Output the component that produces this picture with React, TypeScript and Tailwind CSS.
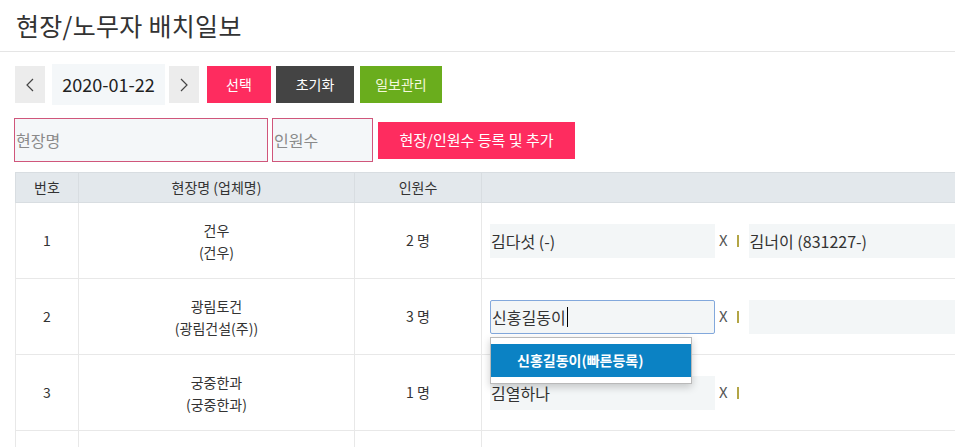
import React from "react";

const rows = [
  { no: 1, site: "건우", company: "(건우)", count: "2 명" },
  { no: 2, site: "광림토건", company: "(광림건설(주))", count: "3 명" },
  { no: 3, site: "궁중한과", company: "(궁중한과)", count: "1 명" },
];

function NameBox({ text, focused, caret }: { text?: string; focused?: boolean; caret?: boolean }) {
  return (
    <div
      className={
        "flex h-[34px] w-[225px] shrink-0 items-center bg-[#f3f6f7] pl-px text-[16px] text-[#333] " +
        (focused ? "rounded-[2px] border border-[#82a8dc] pl-0" : "")
      }
    >
      {text}
      {caret && <span className="ml-px h-[20px] w-px bg-black" />}
    </div>
  );
}

function Sep() {
  return (
    <div className="flex shrink-0 items-center gap-[9px] pl-[4px] pr-[10px] text-[15px] text-[#555]">
      <span>X</span>
      <span className="h-[12px] w-[2px] bg-[#b3a545]" />
    </div>
  );
}

export default function App() {
  return (
    <div className="h-[447px] w-[955px] overflow-hidden bg-white font-['Noto_Sans_CJK_KR','Noto_Sans',sans-serif] text-[#333]">
      <div className="flex h-[52px] items-center border-b border-[#e5e5e5] pl-[16px]">
        <h1 className="text-[25px] font-normal tracking-[0.3px] text-[#333]">현장/노무자 배치일보</h1>
      </div>

      <div className="mt-[12px] flex items-center pl-[15px]">
        <button className="flex h-[37px] w-[30px] items-center justify-center bg-[#ececec] text-[#444]">
          <svg width="8" height="14" viewBox="0 0 8 14" fill="none" stroke="#444" strokeWidth="1.2">
            <path d="M7 1 1 7l6 6" />
          </svg>
        </button>
        <div className="ml-[7px] flex h-[41px] w-[113px] items-center justify-center bg-[#f4f7f9] text-[18px] text-[#222]">
          2020-01-22
        </div>
        <button className="ml-[4px] flex h-[37px] w-[30px] items-center justify-center bg-[#ececec]">
          <svg width="8" height="14" viewBox="0 0 8 14" fill="none" stroke="#444" strokeWidth="1.2">
            <path d="M1 1l6 6-6 6" />
          </svg>
        </button>
        <button className="ml-[8px] h-[37px] w-[64px] bg-[#fe2c5f] text-[14px] text-white">선택</button>
        <button className="ml-[5px] h-[37px] w-[78px] bg-[#444444] text-[14px] text-white">초기화</button>
        <button className="ml-[6px] h-[37px] w-[82px] bg-[#6aad1d] text-[14px] text-[#f4f8dc]">일보관리</button>
      </div>

      <div className="mt-[13px] flex items-center pl-[14px]">
        <div className="flex h-[44px] w-[254px] items-center border border-[#d0567b] bg-[#f4f7f9] pl-[1px] text-[16px] text-[#8a8a8a]">
          현장명
        </div>
        <div className="ml-[4px] flex h-[44px] w-[101px] items-center border border-[#d0567b] bg-[#f4f7f9] pl-[1px] text-[16px] text-[#8a8a8a]">
          인원수
        </div>
        <button className="ml-[5px] h-[37px] w-[197px] bg-[#fe2c5f] text-[15px] text-white">현장/인원수 등록 및 추가</button>
      </div>

      <div className="mt-[10px] pl-[15px]">
        <table className="w-[1100px] table-fixed border-collapse text-[14px] text-[#333]">
          <colgroup>
            <col className="w-[63px]" />
            <col className="w-[276px]" />
            <col className="w-[127px]" />
            <col />
          </colgroup>
          <thead>
            <tr className="h-[30px] bg-[#e3e8ec]">
              <th className="border border-[#d8dde1] font-normal">번호</th>
              <th className="border border-[#d8dde1] font-normal">현장명 (업체명)</th>
              <th className="border border-[#d8dde1] font-normal">인원수</th>
              <th className="border border-[#d8dde1] font-normal"></th>
            </tr>
          </thead>
          <tbody>
            {rows.map((r) => (
              <tr key={r.no} className="h-[76px]">
                <td className="border border-[#e8e8e8] text-center">{r.no}</td>
                <td className="border border-[#e8e8e8] text-center leading-[22px]">
                  <div>{r.site}</div>
                  <div>{r.company}</div>
                </td>
                <td className="border border-[#e8e8e8] text-center">{r.count}</td>
                <td className="border border-[#e8e8e8] pl-[8px]">
                  {r.no === 1 && (
                    <div className="flex items-center">
                      <NameBox text="김다섯 (-)" />
                      <Sep />
                      <NameBox text="김너이 (831227-)" />
                    </div>
                  )}
                  {r.no === 2 && (
                    <div className="relative flex items-center">
                      <NameBox text="신홍길동이" focused caret />
                      <Sep />
                      <NameBox />
                      <div className="absolute left-0 top-[37px] z-10 w-[202px] border border-[#b9b9b9] bg-white py-[6px] shadow-[0_3px_8px_rgba(0,0,0,0.2)]">
                        <div className="flex h-[33px] items-center bg-[#0b82c4] pl-[26px] text-[14px] font-bold text-white">
                          신홍길동이(빠른등록)
                        </div>
                      </div>
                    </div>
                  )}
                  {r.no === 3 && (
                    <div className="flex items-center">
                      <NameBox text="김열하나" />
                      <Sep />
                    </div>
                  )}
                </td>
              </tr>
            ))}
            <tr className="h-[76px]">
              <td className="border border-[#e8e8e8]"></td>
              <td className="border border-[#e8e8e8]"></td>
              <td className="border border-[#e8e8e8]"></td>
              <td className="border border-[#e8e8e8]"></td>
            </tr>
          </tbody>
        </table>
      </div>
    </div>
  );
}
